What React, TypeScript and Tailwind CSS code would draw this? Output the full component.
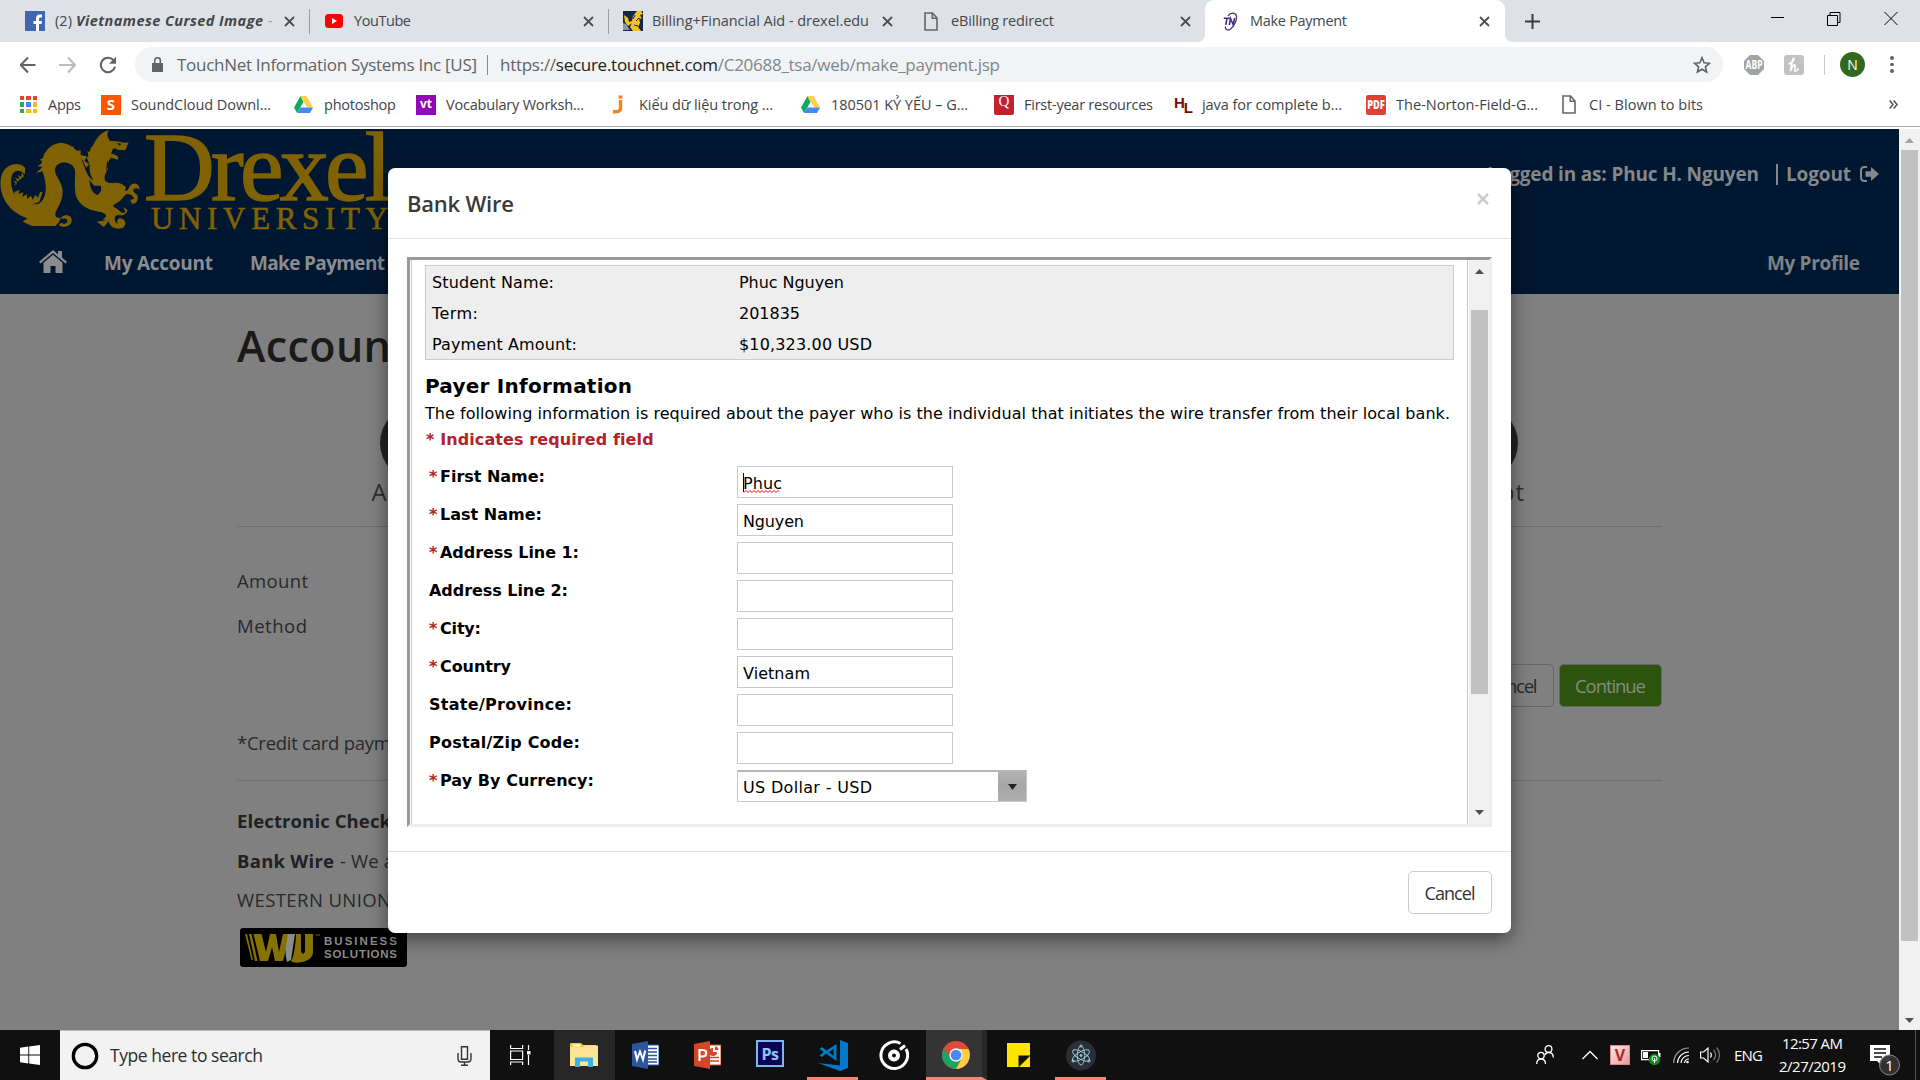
import React, { useLayoutEffect, useRef, useState } from "react";

type FitProps = { w: number; className?: string; children: React.ReactNode };

/* One line of text whose tracking is adjusted so that it fills the width w. */
function Fit({ w, className = "", children }: FitProps) {
  const ref = useRef<HTMLSpanElement>(null);
  const [spacing, setSpacing] = useState(0);
  useLayoutEffect(() => {
    const el = ref.current;
    if (!el) return;
    const count = (el.textContent || "").length;
    el.style.letterSpacing = "0px";
    setSpacing((w - el.getBoundingClientRect().width) / Math.max(1, count - 1));
  }, [w]);
  return (
    <span className={"block shrink-0 whitespace-nowrap " + className} style={{ width: w }}>
      <span ref={ref} className="inline-block" style={{ letterSpacing: spacing + "px" }}>
        {children}
      </span>
    </span>
  );
}

function Cross({ className = "" }: { className?: string }) {
  return (
    <svg className={"h-[11px] w-[11px] shrink-0 " + className} viewBox="0 0 11 11">
      <path d="M1 1l9 9M10 1l-9 9" stroke="#4c5054" strokeWidth="1.8" />
    </svg>
  );
}

function DocIcon() {
  return (
    <svg className="h-[19px] w-[14px] shrink-0" viewBox="0 0 14 19" fill="none" stroke="#63666a" strokeWidth="1.6">
      <path d="M1 1h7.5L13 6v12H1zM8.3 1v5.3H13" />
    </svg>
  );
}

function DrexelMark() {
  return (
    <svg className="h-5 w-5 shrink-0" viewBox="0 0 20 20">
      <rect width="20" height="20" fill="#12284b" />
      <path d="M1 4l4 3 1 4 3-1 1-5 4-5h4l2 3-3 1 2 4-3-1 1 5-2 4 3 4h-8l-3-4 2-4-4 3-3-4z" fill="#f6c421" />
      <path d="M0 12l3 1 4 6H0z" fill="#8d97a8" />
      <path d="M10 8l2-4M13 10l3-3M11 14l4 1" stroke="#12284b" />
    </svg>
  );
}

function TouchNetIcon() {
  return (
    <svg className="h-[19px] w-[15px] shrink-0" viewBox="0 0 15 19" fill="none" stroke="#4a2d83">
      <path d="M5 4C7 .5 12 0 13.300 3.500c1 4-2 11-6 13.700C5 18.700 2 18 2.300 14.500" strokeWidth="1.300" />
      <path d="M.8 6.300h6M4 6.300L2.800 13M6.300 13l1.200-6.500 2.700 6.200 1.400-6.700" strokeWidth="1.600" />
    </svg>
  );
}

function DriveIcon() {
  return (
    <svg className="h-[17px] w-[19px] shrink-0" viewBox="0 0 19 17">
      <path d="M6.500 0L0 11.500 3 17l6.500-11z" fill="#11a861" />
      <path d="M6.500 0h6L19 11.500h-6z" fill="#ffcf48" />
      <path d="M6.300 11.500H19L16 17H3z" fill="#4688f4" />
    </svg>
  );
}

function TabStrip() {
  return (
    <div className="flex h-[42px] bg-[#dee1e6] text-[14.500px] text-[#43474b]">
      <div className="flex w-[311px] items-center pl-[25px]">
        <svg className="h-5 w-5 shrink-0" viewBox="0 0 20 20">
          <rect width="20" height="20" fill="#4267b2" />
          <path d="M11 20v-7H8.500v-3H11V7.500C11 4.700 12.500 3.500 15 3.500h2v3h-1.500c-1.200 0-1.500.5-1.500 1.500v2h3l-.5 3H14v7z" fill="#fff" />
        </svg>
        <div className="ml-[10px] flex w-[218px] overflow-hidden">
          <Fit w={17}>(2)</Fit>
          <Fit w={187} className="ml-1 font-bold italic">Vietnamese Cursed Image</Fit>
          <span className="ml-[5px] text-[#9b9ea3]">-</span>
        </div>
        <Cross className="ml-[11px]" />
        <div className="ml-[14px] h-[25px] w-px bg-[#9a9da2]" />
      </div>
      <div className="flex w-[298px] items-center pl-[14px]">
        <svg className="h-[14px] w-[18px] shrink-0" viewBox="0 0 18 14">
          <rect width="18" height="14" rx="3.500" fill="#f00" />
          <path d="M7 4l5 3-5 3z" fill="#fff" />
        </svg>
        <Fit w={57} className="ml-[11px]">YouTube</Fit>
        <Cross className="ml-[172px]" />
        <div className="ml-[14px] h-[25px] w-px bg-[#9a9da2]" />
      </div>
      <div className="flex w-[298px] items-center pl-[14px]">
        <DrexelMark />
        <Fit w={217} className="ml-[9px]">Billing+Financial Aid - drexel.edu</Fit>
        <Cross className="ml-[13px]" />
        <div className="ml-[14px] h-[25px] w-px bg-[#9a9da2]" />
      </div>
      <div className="flex w-[290px] items-center pl-[17px]">
        <DocIcon />
        <Fit w={103} className="ml-[13px]">eBilling redirect</Fit>
        <Cross className="ml-[126px]" />
      </div>
      <div className="flex h-[42px] items-end">
        <svg className="h-2 w-2" viewBox="0 0 8 8"><path d="M8 0v8H0c5 0 8-3 8-8z" fill="#fff" /></svg>
        <div className="flex h-[42px] w-[300px] items-center rounded-t-[9px] bg-white pl-[18px]">
          <TouchNetIcon />
          <Fit w={97} className="ml-[12px]">Make Payment</Fit>
          <Cross className="ml-[132px]" />
        </div>
        <svg className="h-2 w-2" viewBox="0 0 8 8"><path d="M0 0v8h8C3 8 0 5 0 0z" fill="#fff" /></svg>
      </div>
      <svg className="mt-[14px] ml-[12px] h-[15px] w-[15px]" viewBox="0 0 15 15">
        <path d="M7.500 0v15M0 7.500h15" stroke="#3a3d40" strokeWidth="2" />
      </svg>
      <svg className="mt-[11px] ml-[231px] h-[15px] w-[128px]" viewBox="0 0 128 15" fill="none" stroke="#000">
        <path d="M0 6.500h13M56.500 4.500h10v10h-10zM59 4.500v-3h10v10h-2.500M113.500 1l13 13M126.500 1l-13 13" />
      </svg>
    </div>
  );
}

function Toolbar() {
  return (
    <div className="flex h-[45px] items-center bg-white pl-[20px]">
      <svg className="h-[18px] w-[97px]" viewBox="0 0 97 18" fill="none" strokeWidth="2.100">
        <path d="M15.500 9H1M8 1.500L.7 9l7.300 7.500" stroke="#5f6368" />
        <path d="M39 9h15.500M48 1.500L55 9l-7 7.500" stroke="#babcbe" />
        <path d="M93.500 4.300A7.200 7.200 0 1 0 95 10.800" stroke="#5f6368" />
        <path d="M96 .8v7h-7z" fill="#5f6368" stroke="none" />
      </svg>
      <div className="ml-[18px] flex h-[35px] w-[1588px] items-center rounded-full bg-[#f1f3f4] pl-[17px] text-[17px] text-[#5f6368]">
        <svg className="h-[15px] w-[11px] shrink-0" viewBox="0 0 11 15">
          <path d="M0 6h11v9H0z" fill="#5f6368" />
          <path d="M2.700 6.500V3.500a2.800 2.800 0 0 1 5.600 0v3" fill="none" stroke="#5f6368" strokeWidth="1.600" />
        </svg>
        <Fit w={300} className="ml-[14px]">TouchNet Information Systems Inc [US]</Fit>
        <div className="ml-[10px] h-[20px] w-px bg-[#85888c]" />
        <Fit w={500} className="ml-[12px]">
          https://<span className="text-[#202124]">secure.touchnet.com</span>
          <span className="text-[#80868b]">/C20688_tsa/web/make_payment.jsp</span>
        </Fit>
        <svg className="ml-[693px] h-[18px] w-[18px] shrink-0" viewBox="0 0 18 18">
          <path d="M9 1.800l2.100 5 5.300.5-4 3.500 1.200 5.200L9 13.200 4.400 16l1.200-5.200-4-3.500 5.300-.5z" fill="none" stroke="#5f6368" strokeWidth="1.600" />
        </svg>
      </div>
      <svg className="ml-[21px] h-5 w-5" viewBox="0 0 20 20">
        <path d="M6 0h8l6 6v8l-6 6H6l-6-6V6z" fill="#a3a3a3" />
        <text x="10" y="14" textAnchor="middle" fontSize="11.500" fontWeight="700" fill="#fff" textLength="17" lengthAdjust="spacingAndGlyphs" fontFamily="Open Sans, sans-serif">ABP</text>
      </svg>
      <svg className="ml-5 h-5 w-5" viewBox="0 0 20 20">
        <rect width="20" height="20" rx="3" fill="#c2c2c2" />
        <path d="M4.500 8.500c2 1 6-3 5.500-5C9 2 7.500 9 6.500 16c1-4 3.500-7 4.500-6 1 1-1.500 5.500 0 6s2.500-1 3.500-2.500" fill="none" stroke="#fff" strokeWidth="1.700" />
      </svg>
      <div className="ml-5 h-5 w-px bg-[#c9cbce]" />
      <div className="ml-[15px] flex h-[25px] w-[25px] items-center justify-center rounded-full bg-[#33691e] text-[14px] text-white">N</div>
      <div className="ml-[25px] flex flex-col gap-[3px]">
        <div className="h-[3.500px] w-[3.500px] rounded-full bg-[#5f6368]" />
        <div className="h-[3.500px] w-[3.500px] rounded-full bg-[#5f6368]" />
        <div className="h-[3.500px] w-[3.500px] rounded-full bg-[#5f6368]" />
      </div>
    </div>
  );
}

const appDots = ["#ea4335", "#ea4335", "#ea4335", "#34a853", "#4285f4", "#fbbc05", "#34a853", "#fbbc05", "#fbbc05"];

function Bookmarks() {
  return (
    <div className="flex h-[40px] items-center border-b border-[#a8aaad] bg-white pb-[4px] pl-[20px] text-[14.500px] text-[#3f4347]">
      <div className="grid h-[17px] w-[17px] grid-cols-3 gap-[2px]">
        {appDots.map((c, i) => (
          <i key={i} style={{ background: c }} />
        ))}
      </div>
      <Fit w={33} className="ml-[11px]">Apps</Fit>
      <div className="ml-[20px] flex h-5 w-5 items-center justify-center bg-[#ff5500] text-[15px] font-bold text-white">S</div>
      <Fit w={140} className="ml-[10px]">SoundCloud Downl...</Fit>
      <div className="ml-[23px]"><DriveIcon /></div>
      <Fit w={72} className="ml-[11px]">photoshop</Fit>
      <div className="ml-[20px] flex h-5 w-5 items-center justify-center bg-[#9208b8] pb-[2px] text-[12px] font-bold text-white">vt</div>
      <Fit w={138} className="ml-[10px]">Vocabulary Worksh...</Fit>
      <svg className="ml-[28px] h-[19px] w-[11px]" viewBox="0 0 11 19">
        <path d="M8.500 5v8.500c0 3-4 3.500-7.500 3" fill="none" stroke="#f5821f" strokeWidth="3.400" />
        <path d="M6.500.5h4v3h-4z" fill="#f5821f" />
      </svg>
      <Fit w={134} className="ml-[16px]">Kiểu dữ liệu trong ...</Fit>
      <div className="ml-[28px]"><DriveIcon /></div>
      <Fit w={137} className="ml-[11px]">180501 KỶ YẾU – G...</Fit>
      <div className="ml-[26px] flex h-5 w-5 justify-center rounded-b-[2px] bg-[#c4202f] font-['Liberation_Serif',serif] text-[15px] leading-[12px] text-white">Q</div>
      <Fit w={129} className="ml-[10px]">First-year resources</Fit>
      <div className="ml-[21px] flex w-[18px] items-center font-['Liberation_Sans',sans-serif] text-[15px] leading-none font-bold tracking-[-1px] text-[#7c0a0a]">
        <span className="pb-[5px]">H</span>
        <span className="pt-[5px]">L</span>
      </div>
      <Fit w={140} className="ml-[10px]">java for complete b...</Fit>
      <svg className="ml-[24px] h-5 w-5 shrink-0" viewBox="0 0 20 20">
        <rect width="20" height="20" rx="2" fill="#e04134" />
        <text x="10" y="14.300" textAnchor="middle" fontSize="12" fontWeight="800" fill="#fff" textLength="17.500" lengthAdjust="spacingAndGlyphs" fontFamily="Open Sans, sans-serif">PDF</text>
      </svg>
      <Fit w={142} className="ml-[10px]">The-Norton-Field-G...</Fit>
      <div className="ml-[24px]"><DocIcon /></div>
      <Fit w={114} className="ml-[13px]">CI - Blown to bits</Fit>
      <svg className="ml-[186px] h-[9px] w-[9px]" viewBox="0 0 9 9" fill="none" stroke="#4c5054" strokeWidth="1.500">
        <path d="M.7.5l3.300 4-3.300 4M4.700.5l3.300 4-3.300 4" />
      </svg>
    </div>
  );
}

function Dragon() {
  return (
    <svg className="h-[100px] w-[141px] shrink-0" viewBox="0 12 423 300" fill="#806205">
      <path d="M75 128C62 110 22 112 6 146C-10 196 16 258 82 280L68 290L96 303H166L178 290C184 262 218 268 215 288C212 306 188 310 176 300L184 293C192 300 204 294 202 285C196 276 186 284 180 280L168 276C158 262 186 240 188 205C190 172 164 156 165 134C168 106 214 106 224 132C228 150 222 170 226 205C232 238 262 256 296 260C322 264 324 276 308 282L318 286L290 290L312 306L326 288C330 308 350 314 366 310C382 300 378 282 360 280C350 280 350 292 354 296C342 292 340 274 352 270C368 274 384 266 382 254L370 246L376 262C362 268 358 252 345 248C330 240 350 238 362 226L378 208C392 206 400 212 402 222L390 224L396 236C410 238 416 224 412 210L402 202C396 194 402 186 420 192C416 172 396 170 388 186C380 206 372 196 378 188C370 176 356 172 340 174C312 176 306 160 324 132C326 118 322 106 334 98L354 104C358 92 346 88 334 86C336 70 344 66 352 74L376 76L386 52C372 56 354 46 330 48C322 36 318 26 328 16C300 20 288 44 276 66C262 88 262 96 270 118C266 140 272 150 280 166C262 158 256 132 248 112C240 92 230 60 184 53C140 56 118 100 128 140C142 180 142 220 116 236C80 244 44 226 36 190C26 150 44 120 75 148Z" />
      <path d="M130 138l-22 6 20-18-16-2 20-14-14-6 22-8-8-10 22-2-8-14 24 4-2-14 22 8 4-12 14 14 12-6 4 14 18-2v14l18 4-6 14 14 10-10 10-10-22-42-32-40 6-34 30z" />
      <path d="M266 112l-8-18 10 6-6-22 12 8-2-20 12 8 2-20 12 6 8-20 10 4 8-12-2 40-20 60-20 20z" />
      <path d="M40 180l12-3-13-8 14 0-8-10 14 3-5-12 10 6 2-14 6 12M44 200l16-5-6 12 16-5-3 14 14-8 0 14 12-10 5 12 8-14 8 8 6-16 8-2-10 30-40 16-36-20z" />
      <path d="M268 164l14 18 20 0c4 12 0 22-10 28-14-6-22-20-24-46zM350 54l14 2-5 6zM322 106l6 14-10 18z" fill="#001731" />
    </svg>
  );
}

function SiteHeader() {
  return (
    <div className="h-[165px] bg-[#001731] font-bold">
      <div className="flex h-[101px]">
        <Dragon />
        <div className="ml-[3px] w-[252px] font-['Liberation_Serif',serif] font-normal text-[#806205]">
          <Fit w={248} className="h-[72px] text-[98px] leading-[77px] [-webkit-text-stroke:1.500px_#806205]">Drexel</Fit>
          <Fit w={237} className="ml-[7px] text-[31px] leading-[36px] [-webkit-text-stroke:0.600px_#806205]">UNIVERSITY</Fit>
        </div>
        <div className="ml-[1091px] flex h-[90px] items-center text-[19px] text-[#858789]">
          <Fit w={272}>Logged in as: Phuc H. Nguyen</Fit>
          <div className="ml-[17px] h-[21px] w-[2px] bg-[#858789]" />
          <Fit w={65} className="ml-[8px]">Logout</Fit>
          <svg className="ml-[9px] h-[16px] w-[19px]" viewBox="0 0 19 16">
            <path d="M7 1H4.500A3.300 3.300 0 0 0 1 4.500v7A3.300 3.300 0 0 0 4.500 15H7" fill="none" stroke="#858789" strokeWidth="2" />
            <path d="M5.500 5.300H11V1l8 7-8 7v-4.300H5.500z" fill="#858789" />
          </svg>
        </div>
      </div>
      <div className="flex h-[66px] items-center pl-[39px] text-[19px] text-[#8b8d90]">
        <svg className="mb-[3px] h-[23px] w-[28px]" viewBox="0 0 28 23" fill="#8b8b8d">
          <path d="M14 0l5 4.200V1h4v6.600l5 4.200-1.500 1.700L14 3 1.500 13.500 0 11.800z" />
          <path d="M14 4.800l9.500 8V23h-7v-7h-5v7h-7V12.800z" />
        </svg>
        <Fit w={109} className="ml-[37px]">My Account</Fit>
        <Fit w={135} className="ml-[37px]">Make Payment</Fit>
        <Fit w={93} className="ml-[1382px] text-[#808284]">My Profile</Fit>
      </div>
    </div>
  );
}

function WesternUnion() {
  return (
    <div className="mt-[9px] ml-[3px] flex h-[39px] w-[167px] items-center rounded-[3px] bg-black pl-[5px]">
      <svg className="h-[30px] w-[76px] shrink-0" viewBox="0 0 76 30">
        <path d="M0 1h2l6 26H6.500zM4 1h2.500l6 27H10zM8.500 1h8l4.500 18L25 1h6l3 18 4-18h7l-7 27h-8l-3-14-4 14h-8z" fill="#857200" />
        <path d="M43 1h7l-4 26-4 2c-1-8-3-5 1-28z" fill="#8c8c8c" />
        <path d="M51 1h5v16c0 5 4 5 4 0V1h8v18c0 12-22 12-22 9 3-3 5-20 5-27z" fill="#857200" />
        <path d="M71 2h4" stroke="#857200" />
      </svg>
      <div className="ml-[3px] font-['Liberation_Sans',sans-serif] text-[11.500px] leading-[12.500px] font-bold text-[#8a8a8a]">
        <Fit w={73}>BUSINESS</Fit>
        <Fit w={73}>SOLUTIONS</Fit>
      </div>
    </div>
  );
}

const steps = [
  { label: "Amount", w: 93 },
  { label: "Method", w: 90 },
  { label: "Confirmation", w: 144 },
  { label: "Receipt", w: 88 },
];

function PaymentPage() {
  return (
    <div className="ml-[237px] w-[1425px] pt-[21px] text-[18.500px] text-[#27292a]">
      <div className="h-[62px] text-[43px] leading-[62px] font-semibold text-[#1a1a1a]">
        <Fit w={370}>Account Payment</Fit>
      </div>
      <div className="h-[150px] border-b border-[#6d6d6d] pt-[28px]">
        <div className="ml-1 grid w-[1416px] grid-cols-4 text-[24px] text-[#303132]">
          {steps.map((s) => (
            <div key={s.label} className="flex flex-col items-center">
              <div className="h-[76px] w-[76px] rounded-full bg-[#222324]" />
              <Fit w={s.w} className="-mt-[4px] leading-[30px]">{s.label}</Fit>
            </div>
          ))}
        </div>
      </div>
      <div className="mt-[31px] h-[45px] leading-[45px]"><Fit w={71}>Amount</Fit></div>
      <div className="h-[45px] leading-[45px]"><Fit w={70}>Method</Fit></div>
      <div className="mt-[16px] flex justify-end gap-[5px] leading-[42px]">
        <div className="flex h-[43px] w-[84px] justify-center rounded-[5px] border border-[#666]"><Fit w={51}>Cancel</Fit></div>
        <div className="flex h-[43px] w-[103px] justify-center rounded-[5px] border border-[#666] bg-[#2d540e] text-[#858b80]"><Fit w={71}>Continue</Fit></div>
      </div>
      <div className="mt-[21px] leading-[30px]"><Fit w={222}>*Credit card payments are</Fit></div>
      <div className="mt-[22px] h-px bg-[#6d6d6d]" />
      <div className="mt-[20px] h-[40px] leading-[40px] font-bold text-[#202122]"><Fit w={154}>Electronic Check</Fit></div>
      <div className="flex h-[40px] leading-[40px]">
        <Fit w={97} className="font-bold text-[#202122]">Bank Wire</Fit>
        <Fit w={101} className="ml-[6px]">- We accept</Fit>
      </div>
      <div className="h-[38px] leading-[38px]"><Fit w={154}>WESTERN UNION</Fit></div>
      <WesternUnion />
    </div>
  );
}

type Field = { label: string; w: number; required?: boolean; value?: string; vw?: number };

const fields: Field[] = [
  { label: "First Name:", w: 105, required: true, value: "Phuc", vw: 39 },
  { label: "Last Name:", w: 102, required: true, value: "Nguyen", vw: 61 },
  { label: "Address Line 1:", w: 139, required: true },
  { label: "Address Line 2:", w: 139 },
  { label: "City:", w: 41, required: true },
  { label: "Country", w: 71, required: true, value: "Vietnam", vw: 67 },
  { label: "State/Province:", w: 143 },
  { label: "Postal/Zip Code:", w: 151 },
  { label: "Pay By Currency:", w: 154, required: true },
];

const summary = [
  { label: "Student Name:", w: 122, value: "Phuc Nguyen", vw: 105 },
  { label: "Term:", w: 46, value: "201835", vw: 61 },
  { label: "Payment Amount:", w: 145, value: "$10,323.00 USD", vw: 133 },
];

function FormRow({ f }: { f: Field }) {
  return (
    <div className="flex h-[38px]">
      <div className="flex w-[308px] pt-px leading-[20px] font-bold">
        {f.required && <span className="w-[11px] text-[#b22222]">*</span>}
        <Fit w={f.w}>{f.label}</Fit>
      </div>
      {f.label === "Pay By Currency:" ? (
        <div className="flex h-[32px] w-[290px] border border-t-2 border-[#c9c9c9] border-t-[#b5b5b5]">
          <Fit w={129} className="ml-[5px] leading-[31px]">US Dollar - USD</Fit>
          <div className="ml-auto flex h-[29px] w-[28px] items-center justify-center bg-linear-to-b from-[#b2b2b2] via-[#a6a6a6] to-[#b0b0b0]">
            <svg className="h-[6px] w-[9px]" viewBox="0 0 9 6"><path d="M0 0h9L4.500 6z" fill="#222" /></svg>
          </div>
        </div>
      ) : (
        <div className="relative h-[32px] w-[216px] border border-[#c9c9c9] pl-[5px] leading-[33px]">
          {f.value && <Fit w={f.vw || 0}>{f.value}</Fit>}
          {f.value === "Phuc" && (
            <>
              <div className="absolute top-[6px] left-[5px] h-[19px] w-px bg-black" />
              <svg className="absolute top-[23px] left-[6px] h-[3px] w-[37px]" viewBox="0 0 37 3">
                <path d="M0 2.500l2-2 2 2 2-2 2 2 2-2 2 2 2-2 2 2 2-2 2 2 2-2 2 2 2-2 2 2 2-2 2 2 2-2 1 1" fill="none" stroke="#f00" />
              </svg>
            </>
          )}
        </div>
      )}
    </div>
  );
}

function BankWireModal() {
  return (
    <div className="absolute top-[39px] left-[388px] h-[765px] w-[1123px] rounded-[7px] bg-white shadow-[0_6px_19px_rgba(0,0,0,0.5)]">
      <div className="flex h-[71px] justify-between border-b border-[#e3e3e3] pt-[19px] pr-[22px] pl-[19px]">
        <Fit w={107} className="text-[22px] leading-[32px] font-semibold text-[#3a3a3a]">Bank Wire</Fit>
        <svg className="mt-[6px] h-[12px] w-[12px]" viewBox="0 0 12 12"><path d="M1 1l10 10M11 1L1 11" stroke="#ccc" strokeWidth="2.500" /></svg>
      </div>
      <div className="mt-[18px] ml-[19px] flex h-[570px] w-[1085px] border-[3px] border-t-[#999] border-r-[#eee] border-b-[#eee] border-l-[#999] pl-px">
        <div className="w-[1057px] shrink-0 border-x border-[#ccc] pt-[5px] pl-[13px] font-['DejaVu_Sans',sans-serif] text-[16px] text-black">
          <div className="h-[95px] w-[1029px] border border-[#ccc] bg-[#eee] py-px pl-[6px]">
            {summary.map((s) => (
              <div key={s.label} className="flex h-[31px] leading-[31px]">
                <div className="w-[307px]"><Fit w={s.w}>{s.label}</Fit></div>
                <Fit w={s.vw}>{s.value}</Fit>
              </div>
            ))}
          </div>
          <Fit w={207} className="mt-[12px] text-[20px] leading-[28px] font-bold">Payer Information</Fit>
          <Fit w={1025} className="leading-[27px]">
            The following information is required about the payer who is the individual that initiates the wire transfer from their local bank.
          </Fit>
          <Fit w={227} className="ml-px leading-[25px] font-bold text-[#b2222a]">* Indicates required field</Fit>
          <div className="mt-[14px] ml-[4px]">
            {fields.map((f) => (
              <FormRow key={f.label} f={f} />
            ))}
          </div>
        </div>
        <div className="ml-px flex flex-1 flex-col items-center bg-[#f1f1f1]">
          <svg className="mt-[9px] h-[5px] w-[9px]" viewBox="0 0 9 5"><path d="M0 5h9L4.500 0z" fill="#505050" /></svg>
          <div className="mt-[36px] h-[384px] w-[17px] bg-[#c1c1c1]" />
          <svg className="mt-[116px] h-[5px] w-[9px]" viewBox="0 0 9 5"><path d="M0 0h9L4.500 5z" fill="#505050" /></svg>
        </div>
      </div>
      <div className="mt-[24px] flex justify-end border-t border-[#e3e3e3] pt-[19px] pr-[19px]">
        <div className="flex h-[43px] w-[84px] justify-center rounded-[5px] border border-[#ccc] text-[18px] leading-[43px] text-[#333]"><Fit w={51}>Cancel</Fit></div>
      </div>
    </div>
  );
}

function Tile({ className = "", active = false, children }: { className?: string; active?: boolean; children: React.ReactNode }) {
  return (
    <div className={"flex h-[50px] shrink-0 items-center justify-center " + (active ? "border-b-[3px] border-[#f98471] pt-[3px] " : "") + className}>{children}</div>
  );
}

function Taskbar() {
  return (
    <div className="flex h-[50px] bg-[#101010] text-white">
      <Tile className="w-[60px]">
        <svg className="h-5 w-5" viewBox="0 0 20 20" fill="#fff"><path d="M0 2.800l8.300-1.200v8H0zM9.200 1.400L20 0v9.500H9.200zM0 10.400h8.300v8L0 17.200zM9.200 10.400H20V20L9.200 18.500z" /></svg>
      </Tile>
      <div className="flex w-[430px] items-center border-t border-[#bdbdbd] bg-[#f2f2f2] pl-[11px] text-[17.500px] text-[#2d2d2d]">
        <svg className="h-[28px] w-[28px]" viewBox="0 0 28 28"><circle cx="14" cy="14" r="11.700" fill="none" stroke="#000" strokeWidth="3.300" /></svg>
        <Fit w={153} className="ml-[11px]">Type here to search</Fit>
        <svg className="ml-[194px] h-[20px] w-[15px]" viewBox="0 0 15 20" fill="none" stroke="#333" strokeWidth="1.400">
          <path d="M4.500.7h6v12.600h-6zM1 7v5.500C1 15.500 3 16 4.500 16h6c1.500 0 3.500-.5 3.500-3.500V7M7.500 16v3M4 19.300h7" />
        </svg>
      </div>
      <Tile className="w-[64px]">
        <svg className="mr-[4px] h-5 w-[21px]" viewBox="0 0 21 20" fill="none" stroke="#fff" strokeWidth="1.200">
          <path d="M.6 0v3.500h12V0M.6 6h12v8.500H.6zM.6 20v-3h12v3M18.500 0v5M18.500 10v10" />
          <path d="M17 6h3.500v3.500H17z" fill="#fff" stroke="none" />
        </svg>
      </Tile>
      <Tile className="w-[61px] bg-[#272727] pr-[2px]">
        <svg className="h-[24px] w-[28px]" viewBox="0 0 28 24">
          <path d="M0 1.500C0 .5.500 0 1.500 0H11l2 2h13v5H0z" fill="#f5c84c" />
          <path d="M0 4h13l2-1.500h13V23H0z" fill="#ffe495" />
          <path d="M3 1.500h7v2H3z" fill="#fff" />
          <path d="M5 24v-9.500h18V24h-5v-5.500h-8V24z" fill="#3bb2e6" />
        </svg>
      </Tile>
      <Tile className="w-[61px]">
        <svg className="h-[28px] w-[27px]" viewBox="0 0 27 28">
          <path d="M14 4h13v20H14z" fill="#fff" stroke="#2b579a" />
          <path d="M16 7.500h9M16 11h9M16 14.500h9M16 18h9M16 21h9" stroke="#2b579a" strokeWidth="1.300" />
          <path d="M0 3l16-3v28L0 25z" fill="#2b579a" />
          <path d="M3 10l2 8.500L8 10.500l3 8L13.200 9.500" fill="none" stroke="#fff" strokeWidth="2" />
        </svg>
      </Tile>
      <Tile className="w-[62px]">
        <svg className="h-[28px] w-[27px]" viewBox="0 0 27 28">
          <path d="M14 4h13v20H14z" fill="#fff" stroke="#d24726" />
          <path d="M16 16.500h9M16 20h9" stroke="#d24726" strokeWidth="1.500" />
          <path d="M19 7a4 4 0 1 0 4 4h-4zM21 5.500v3.500h3.500a3.500 3.500 0 0 0-3.500-3.500z" fill="#d24726" />
          <path d="M0 3l16-3v28L0 25z" fill="#d24726" />
          <path d="M5.500 20V9h3c5 0 5 6.500 0 6.500h-3" fill="none" stroke="#fff" strokeWidth="2.200" />
        </svg>
      </Tile>
      <Tile className="w-[69px] pr-[5px]">
        <div className="mb-[3px] flex h-[27px] w-[28px] items-center justify-center border-2 border-[#7fb4ef] bg-[#0c0452] text-[16px] font-bold tracking-[-0.5px] text-[#8fc5ff]">Ps</div>
      </Tile>
      <Tile active className="w-[51px]">
        <svg className="h-[31px] w-[30px]" viewBox="0 0 30 31" fill="#0179cb">
          <path d="M22 0l8 3v25l-8 3L0 23l22 2.500z" />
          <path d="M18.500 4v17L8 13.500 4 17l-2.500-1.500L5.500 12 1.500 9 4 7l4.500 3.500zM15.500 9L11 12.300l4.500 3.700z" fillRule="evenodd" />
        </svg>
      </Tile>
      <Tile className="w-[68px] pl-[3px]">
        <svg className="h-[31px] w-[30px]" viewBox="0 0 30 31" fill="none" stroke="#fff">
          <path d="M21.500 3.500A13.300 13.300 0 1 0 27 9" strokeWidth="3" />
          <circle cx="15" cy="15.500" r="4" strokeWidth="4" />
          <path d="M21 9.500l5-4" strokeWidth="3" />
        </svg>
      </Tile>
      <Tile active className="w-[61px] border-r-[5px] border-r-[#272727] bg-[#343434] pl-[3px]">
        <svg className="h-[28px] w-[28px]" viewBox="0 0 28 28">
          <circle cx="14" cy="14" r="14" fill="#dd4b3e" />
          <path d="M1.900 7A14 14 0 0 0 14 28l6-11-6-3-5.500 3z" fill="#1da261" />
          <path d="M14 28A14 14 0 0 0 26.500 8H14l6 9z" fill="#ffcd42" />
          <circle cx="14" cy="14" r="6.700" fill="#f3f3f3" />
          <circle cx="14" cy="14" r="5.300" fill="#4688f4" />
        </svg>
      </Tile>
      <Tile className="w-[62px]">
        <svg className="h-[24px] w-[23px]" viewBox="0 0 23 24"><path d="M0 0h23v12L11.500 24H0z" fill="#ffe400" /><path d="M11.500 24V12.500H23z" fill="#111" /><path d="M23 13v11H12z" fill="#ffe400" /></svg>
      </Tile>
      <Tile active className="ml-[6px] w-[51px]">
        <svg className="h-[31px] w-[30px]" viewBox="0 0 30 31" fill="none" stroke="#9fcfd6" strokeWidth="0.900">
          <circle cx="15" cy="15.500" r="15" fill="#2b2e3a" stroke="none" />
          <ellipse cx="15" cy="15.500" rx="9.500" ry="3.700" transform="rotate(30 15 15.500)" />
          <ellipse cx="15" cy="15.500" rx="9.500" ry="3.700" transform="rotate(-30 15 15.500)" />
          <ellipse cx="15" cy="15.500" rx="9.500" ry="3.700" transform="rotate(90 15 15.500)" />
          <circle cx="15" cy="15.500" r="1" fill="#9fcfd6" />
          <circle cx="7" cy="21" r="1.100" /><circle cx="23" cy="21" r="1.100" /><circle cx="15" cy="6" r="1.100" />
        </svg>
      </Tile>
      <svg className="mt-[15px] ml-[430px] h-[19px] w-[18px]" viewBox="0 0 18 19" fill="none" stroke="#fff" strokeWidth="1.300">
        <circle cx="12.500" cy="4" r="3.400" /><circle cx="5" cy="10.500" r="3.200" />
        <path d="M.7 19c0-3 1.500-5 4.300-5s4.500 2 4.500 5M9 10c.5-1.500 2-2.500 3.500-2.500 3 0 4.800 2 4.800 5" />
      </svg>
      <svg className="mt-[20px] ml-[28px] h-[10px] w-[16px]" viewBox="0 0 16 10" fill="none" stroke="#fff" strokeWidth="1.300"><path d="M.5 9L8 1.500 15.500 9" /></svg>
      <div className="mt-[15px] ml-[12px] flex h-5 w-5 items-center justify-center border border-[#d88] bg-linear-to-br from-[#f6eaea] to-[#e59a9a] text-[16px] leading-none font-bold text-[#b0272b]">V</div>
      <svg className="mt-[18px] ml-[11px] h-[18px] w-[20px]" viewBox="0 0 20 18">
        <path d="M.6 2.600h17v9H.6z" fill="none" stroke="#fff" strokeWidth="1.200" /><path d="M2 4h5v6H2zM18 5h1.500v4H18z" fill="#fff" />
        <circle cx="13.500" cy="11.500" r="5.700" fill="#0f8a1f" /><path d="M13.500 15V10M13.500 8a2.200 2.200 0 0 1 0 5 2.200 2.200 0 0 1 0-5z" fill="none" stroke="#fff" />
      </svg>
      <svg className="mt-[17px] ml-[12px] h-[17px] w-[17px]" viewBox="0 0 17 17" fill="none" stroke="#fff" strokeWidth="1.200">
        <path d="M.7 16A15 15 0 0 1 16 1" stroke="#999" /><path d="M4.500 16A11.500 11.500 0 0 1 16 5M8 16a8 8 0 0 1 8-7.500M11.500 16a4.500 4.500 0 0 1 4.500-4" /><circle cx="14.500" cy="15" r="1.300" fill="#fff" stroke="none" />
      </svg>
      <svg className="mt-[16px] ml-[10px] h-[18px] w-[21px]" viewBox="0 0 21 18" fill="none" stroke="#fff" strokeWidth="1.200">
        <path d="M.6 6h3L8 2v14l-4.400-4H.6zM10.500 6.500c1 1.500 1 3.500 0 5" /><path d="M13.500 4c2.500 3 2.500 7 0 10M16.500 1.500c4 4.500 4 10.500 0 15" stroke="#777" />
      </svg>
      <Fit w={29} className="ml-[13px] text-[15px] leading-[51px]">ENG</Fit>
      <div className="ml-[16px] flex w-[67px] flex-col items-center pt-[2px] text-[15px] leading-[23px]">
        <Fit w={61}>12:57 AM</Fit>
        <Fit w={67}>2/27/2019</Fit>
      </div>
      <svg className="mt-[15px] ml-[24px] h-[32px] w-[31px]" viewBox="0 0 31 32">
        <path d="M0 0h20v16h-8v5l-5-5H0z" fill="#fff" /><path d="M4 4h12M4 8h12M4 12h8" stroke="#101010" strokeWidth="1.400" />
        <circle cx="19.500" cy="20" r="10" fill="#333" stroke="#888" fillOpacity="0.950" />
        <text x="19.500" y="25.500" textAnchor="middle" fontSize="15" fill="#fff" fontFamily="Open Sans, sans-serif">1</text>
      </svg>
      <div className="ml-[14px] h-[50px] w-px bg-[#555]" />
    </div>
  );
}

export default function App() {
  return (
    <div className="flex h-[1080px] w-[1920px] flex-col overflow-hidden bg-white font-['Open_Sans','Noto_Sans',sans-serif]">
      <TabStrip />
      <Toolbar />
      <Bookmarks />
      <div className="relative mt-[2px] flex h-[901px]">
        <div className="w-[1899px] overflow-hidden bg-[#808080]">
          <SiteHeader />
          <PaymentPage />
        </div>
        <div className="flex w-[21px] flex-col items-center bg-[#f1f1f1]">
          <svg className="mt-[9px] h-[5px] w-[9px]" viewBox="0 0 9 5"><path d="M0 5h9L4.500 0z" fill="#a3a3a3" /></svg>
          <div className="mt-[7px] h-[791px] w-[17px] bg-[#c1c1c1]" />
          <svg className="mt-[77px] h-[5px] w-[9px]" viewBox="0 0 9 5"><path d="M0 0h9L4.500 5z" fill="#505050" /></svg>
        </div>
        <BankWireModal />
      </div>
      <Taskbar />
    </div>
  );
}
